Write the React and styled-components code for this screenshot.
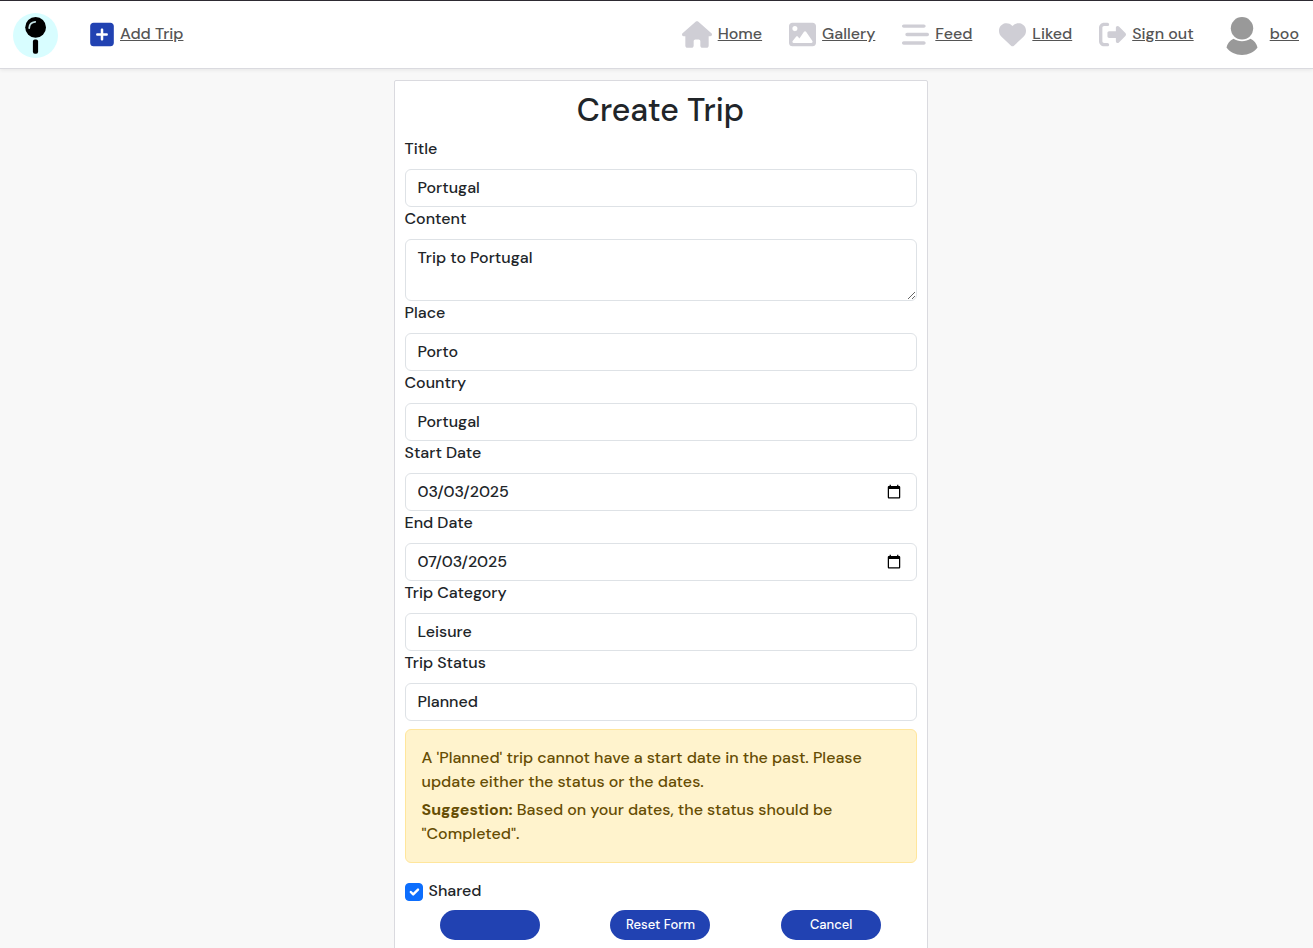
import React from "react";
import styled, { createGlobalStyle } from "styled-components";
import {
  FaHouse,
  FaImage,
  FaBarsStaggered,
  FaHeart,
  FaRightFromBracket,
  FaSquarePlus,
} from "react-icons/fa6";

const GlobalStyle = createGlobalStyle`
  *, *::before, *::after { box-sizing: border-box; }
  body {
    margin: 0;
    background: #f8f8f8;
    color: #212529;
    font-family: "DM Sans", Roboto, "Liberation Sans", sans-serif;
    font-size: 16px;
    font-weight: 500;
    font-optical-sizing: none;
    line-height: 24px;
  }
`;

const Header = styled.header`
  display: flex;
  align-items: center;
  justify-content: space-between;
  height: 69px;
  padding: 0 14px 0 13px;
  background: #ffffff;
  border-top: 1px solid #2d2a32;
  border-bottom: 1px solid #dadadf;
  box-shadow: 0 1px 4px rgba(0, 0, 0, 0.08);
`;

const NavGroup = styled.nav`
  display: flex;
  align-items: center;
  gap: ${(p) => p.$gap};
`;

const NavLink = styled.a`
  display: flex;
  align-items: center;
  gap: 6px;
  color: #555555;
  text-decoration: none;

  span {
    margin-bottom: 2px;
    text-decoration: underline;
  }

  svg {
    flex: none;
    width: ${(p) => p.$iconWidth || "27px"};
    height: 27px;
    color: ${(p) => p.$iconColor || "#cfced5"};
  }
`;

const ProfileLink = styled(NavLink)`
  gap: 12px;
  margin-left: 5px;
`;

const LogoLink = styled.a`
  display: block;
  width: 45px;
  height: 45px;
  margin-top: 2px;
`;

const Avatar = styled.svg`
  && {
    width: 32px;
    height: 38px;
    margin-top: 2px;
    color: #999999;
  }
`;

const Main = styled.main`
  display: flex;
  justify-content: center;
  padding: 11px 0 0 8px;
`;

const Card = styled.form`
  width: 100%;
  max-width: 534px;
  padding: 10px;
  background: #ffffff;
  border: 1px solid #dadadf;
  border-radius: 2px;
`;

const Heading = styled.h1`
  margin: 0 0 8px;
  font-size: 32px;
  font-weight: 500;
  line-height: 38px;
  text-align: center;
`;

const Label = styled.label`
  display: block;
  margin-bottom: 8px;
`;

const Control = styled.input`
  display: block;
  width: 100%;
  height: ${(p) => p.$height || "38px"};
  padding: 6px 12px;
  color: #212529;
  font: inherit;
  font-optical-sizing: none;
  background: #ffffff;
  border: 1px solid #dee2e6;
  border-radius: 6px;
  appearance: none;
  outline: none;
  resize: vertical;

  &[type="text"] {
    padding-bottom: 8px;
  }

  &::-webkit-datetime-edit,
  &::-webkit-datetime-edit-fields-wrapper {
    padding: 0;
    font-variant-numeric: normal;
  }

  &::-webkit-datetime-edit-month-field,
  &::-webkit-datetime-edit-day-field,
  &::-webkit-datetime-edit-year-field {
    padding: 0;
    font-variant-numeric: normal;
  }
`;

const Warning = styled.div`
  margin: 8px 0 16px;
  padding: 16px;
  color: #664d03;
  background: #fff3cd;
  border: 1px solid #ffe69c;
  border-radius: 6px;

  p {
    margin: 0;
  }

  p + p {
    margin-top: 4px;
  }
`;

const CheckRow = styled.label`
  display: flex;
  align-items: center;
  gap: 6px;
  margin-bottom: 7px;
`;

const Checkbox = styled.input`
  appearance: none;
  width: 18px;
  height: 18px;
  margin: 2px 0 0;
  border: 1px solid #dee2e6;
  border-radius: 4px;
  background: #ffffff;

  &:checked {
    border-color: #0d6efd;
    background: #0d6efd
      url("data:image/svg+xml,%3csvg xmlns='http://www.w3.org/2000/svg' viewBox='0 0 20 20'%3e%3cpath fill='none' stroke='%23fff' stroke-linecap='round' stroke-linejoin='round' stroke-width='3' d='m6 10 3 3 6-6'/%3e%3c/svg%3e")
      center / contain no-repeat;
  }
`;

const Actions = styled.div`
  display: flex;
  justify-content: space-around;
`;

const Button = styled.button`
  width: 100px;
  height: 30px;
  padding: 0 0 1px;
  color: #ffffff;
  font-family: inherit;
  font-size: 13px;
  font-weight: 500;
  background: #2142b2;
  border: none;
  border-radius: 15px;
`;

function Field({ id, label, children, ...rest }) {
  return (
    <div>
      <Label htmlFor={id}>{label}</Label>
      <Control id={id} name={id} {...rest}>
        {children}
      </Control>
    </div>
  );
}

function Logo() {
  return (
    <svg width="45" height="45" viewBox="0 0 45 45" role="img" aria-label="Trips">
      <circle cx="22.5" cy="22.5" r="22.5" fill="#d8fdff" />
      <rect x="19.9" y="26.5" width="5.2" height="14.3" rx="2" fill="#000" />
      <circle cx="22.6" cy="14.4" r="10.4" fill="#000" />
      <path
        d="M16.2 15c.2-3.600 2.400-5.800 6-6.100"
        fill="none"
        stroke="#c4e2e4"
        strokeWidth="1.8"
        strokeLinecap="round"
      />
    </svg>
  );
}

const links = [
  { text: "Home", Icon: FaHouse, iconWidth: "30px" },
  { text: "Gallery", Icon: FaImage },
  { text: "Feed", Icon: FaBarsStaggered },
  { text: "Liked", Icon: FaHeart },
  { text: "Sign out", Icon: FaRightFromBracket },
];

export default function App() {
  return (
    <>
      <GlobalStyle />
      <Header>
        <NavGroup $gap="32px" aria-label="Create">
          <LogoLink href="#home">
            <Logo />
          </LogoLink>
          <NavLink href="#add" $iconColor="#2142b2" $iconWidth="24px">
            <FaSquarePlus />
            <span>Add Trip</span>
          </NavLink>
        </NavGroup>
        <NavGroup $gap="27px" aria-label="Main">
          {links.map(({ text, Icon, iconWidth }) => (
            <NavLink key={text} href="#nav" $iconWidth={iconWidth}>
              <Icon />
              <span>{text}</span>
            </NavLink>
          ))}
          <ProfileLink href="#profile">
            <Avatar viewBox="0 0 32 38" fill="currentColor" aria-hidden="true">
              <circle cx="16" cy="11.3" r="11.2" />
              <path d="M7.5 21.8C9.8 23.4 12.8 24.3 16 24.3S22.2 23.4 24.5 21.8C28.1 23.5 30.7 26.6 31.5 30.5C27.9 35.2 22.500 38 16 38S4.100 35.200 .5 30.500C1.300 26.600 3.900 23.500 7.500 21.800Z" />
            </Avatar>
            <span>boo</span>
          </ProfileLink>
        </NavGroup>
      </Header>
      <Main>
        <Card onSubmit={(e) => e.preventDefault()}>
          <Heading>Create Trip</Heading>
          <Field id="title" label="Title" type="text" defaultValue="Portugal" />
          <Field
            id="content"
            label="Content"
            as="textarea"
            $height="62px"
            defaultValue="Trip to Portugal"
          />
          <Field id="place" label="Place" type="text" defaultValue="Porto" />
          <Field id="country" label="Country" type="text" defaultValue="Portugal" />
          <Field id="start_date" label="Start Date" type="date" defaultValue="2025-03-03" />
          <Field id="end_date" label="End Date" type="date" defaultValue="2025-07-03" />
          <Field id="category" label="Trip Category" as="select" defaultValue="Leisure">
            <option>Leisure</option>
          </Field>
          <Field id="status" label="Trip Status" as="select" defaultValue="Planned">
            <option>Planned</option>
          </Field>
          <Warning role="alert">
            <p>
              A 'Planned' trip cannot have a start date in the past. Please update
              either the status or the dates.
            </p>
            <p>
              <strong>Suggestion:</strong> Based on your dates, the status should be
              "Completed".
            </p>
          </Warning>
          <CheckRow htmlFor="shared">
            <Checkbox id="shared" type="checkbox" defaultChecked />
            Shared
          </CheckRow>
          <Actions>
            <Button type="submit" aria-label="Create" />
            <Button type="reset">Reset Form</Button>
            <Button type="button">Cancel</Button>
          </Actions>
        </Card>
      </Main>
    </>
  );
}
